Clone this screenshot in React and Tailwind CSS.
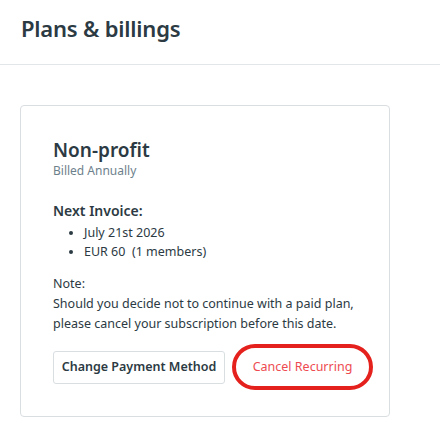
export default function App() {
  return (
    <div className="min-h-[435px] bg-white text-[#2c3a43]" style={{ fontFamily: '"Noto Sans", sans-serif' }}>
      <header className="h-[65px] border-b border-[#e2e6e8] px-[21px] pt-[13px]">
        <h1 className="text-[22px] font-semibold leading-[30px] tracking-[-0.2px]">Plans &amp; billings</h1>
      </header>

      <main className="px-5 pt-10">
        <section className="w-[370px] rounded-[4px] border border-[#d9dee1] pl-[32px] pr-[15px] pt-[31px] pb-[32px]">
          <h2 className="text-[19px] font-semibold leading-[26px]">Non-profit</h2>
          <p className="text-[12px] leading-[16px] text-[#6d818c]">Billed Annually</p>

          <h3 className="mt-[22px] text-[14px] font-semibold leading-[20px]">Next Invoice:</h3>
          <ul className="mt-[2px] list-disc pl-[31px] text-[12.5px] leading-[19px]">
            <li>July 21st 2026</li>
            <li>EUR 60 &nbsp;(1 members)</li>
          </ul>

          <div className="mt-[13px] text-[12.5px] leading-[20px]">
            <p>Note:</p>
            <p>Should you decide not to continue with a paid plan,</p>
            <p>please cancel your subscription before this date.</p>
          </div>

          <div className="mt-[16px] flex items-center gap-[7px]">
            <button className="h-[33px] w-[172px] shrink-0 rounded-[3px] border border-[#d9dee1] text-[12.5px] font-semibold text-[#2c3a43]">
              Change Payment Method
            </button>
            <button className="-my-[6px] h-[46px] w-[141px] shrink-0 rounded-[23px] border-[4px] border-[#e5211d] text-[12.5px] text-[#ee4b51]">
              Cancel Recurring
            </button>
          </div>
        </section>
      </main>
    </div>
  );
}
